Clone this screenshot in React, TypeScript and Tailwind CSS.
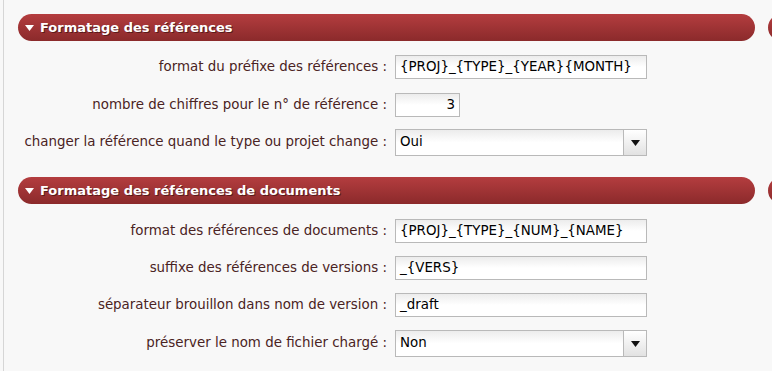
import React from "react";

const font = { fontFamily: '"DejaVu Sans", Verdana, sans-serif' };

function Header({ title }: { title: string }) {
  return (
    <div className="flex items-center gap-[13px]">
      <div className="ml-[14px] h-[27px] w-[737px] shrink-0 rounded-full bg-gradient-to-b from-[#b43d3f] to-[#8b2a2b] flex items-center pl-[7px]">
        <svg width="9" height="6" viewBox="0 0 9 6" className="mr-[6px]">
          <polygon points="0,0 9,0 4.5,6" fill="#ffffff" />
        </svg>
        <span className="text-white font-bold text-[13px] [text-shadow:1px_1px_0_#5a1a1a]">{title}</span>
      </div>
      <div className="h-[27px] w-[20px] shrink-0 rounded-l-full bg-gradient-to-b from-[#b43d3f] to-[#8b2a2b]" />
    </div>
  );
}

function Label({ text }: { text: string }) {
  return (
    <div className="w-[391px] shrink-0 text-right text-[13.4px] text-[#4a2323] pr-[8px]">{text} :</div>
  );
}

function TextInput({ value, w = 252, right = false }: { value: string; w?: number; right?: boolean }) {
  return (
    <div
      className={`h-[24px] shrink-0 border border-[#b9b9b9] bg-gradient-to-b from-[#ececec] via-white to-white flex items-center px-[4px] text-[13.4px] text-black ${right ? "justify-end" : ""}`}
      style={{ width: w }}
    >
      {value}
    </div>
  );
}

function Select({ value }: { value: string }) {
  return (
    <div className="h-[27px] w-[252px] shrink-0 border border-[#b9b9b9] bg-gradient-to-b from-[#ececec] via-white to-white flex items-stretch text-[13.4px] text-black">
      <div className="flex-1 flex items-center px-[4px]">{value}</div>
      <div className="w-[23px] border-l border-[#b9b9b9] bg-gradient-to-b from-white to-[#e2e2e2] flex items-center justify-center">
        <svg width="9" height="6" viewBox="0 0 9 6">
          <polygon points="0,0 9,0 4.5,6" fill="#111" />
        </svg>
      </div>
    </div>
  );
}

function Row({ label, className, children }: { label: string; className: string; children: React.ReactNode }) {
  return (
    <div className={`flex items-center ${className}`}>
      <Label text={label} />
      {children}
    </div>
  );
}

export default function App() {
  return (
    <div className="w-[772px] h-[371px] bg-[#f8f8f8] overflow-hidden" style={font}>
      <div className="ml-[3px] h-full border-l border-[#d6d6d6] pt-[14px] flex flex-col">
        <Header title="Formatage des références" />
        <Row label="format du préfixe des références" className="mt-[14px]">
          <TextInput value="{PROJ}_{TYPE}_{YEAR}{MONTH}" />
        </Row>
        <Row label="nombre de chiffres pour le n° de référence" className="mt-[14px]">
          <TextInput value="3" w={65} right />
        </Row>
        <Row label="changer la référence quand le type ou projet change" className="mt-[12px]">
          <Select value="Oui" />
        </Row>
        <div className="mt-[21px]">
          <Header title="Formatage des références de documents" />
        </div>
        <Row label="format des références de documents" className="mt-[15px]">
          <TextInput value="{PROJ}_{TYPE}_{NUM}_{NAME}" />
        </Row>
        <Row label="suffixe des références de versions" className="mt-[13px]">
          <TextInput value="_{VERS}" />
        </Row>
        <Row label="séparateur brouillon dans nom de version" className="mt-[13px]">
          <TextInput value="_draft" />
        </Row>
        <Row label="préserver le nom de fichier chargé" className="mt-[13px]">
          <Select value="Non" />
        </Row>
      </div>
    </div>
  );
}
